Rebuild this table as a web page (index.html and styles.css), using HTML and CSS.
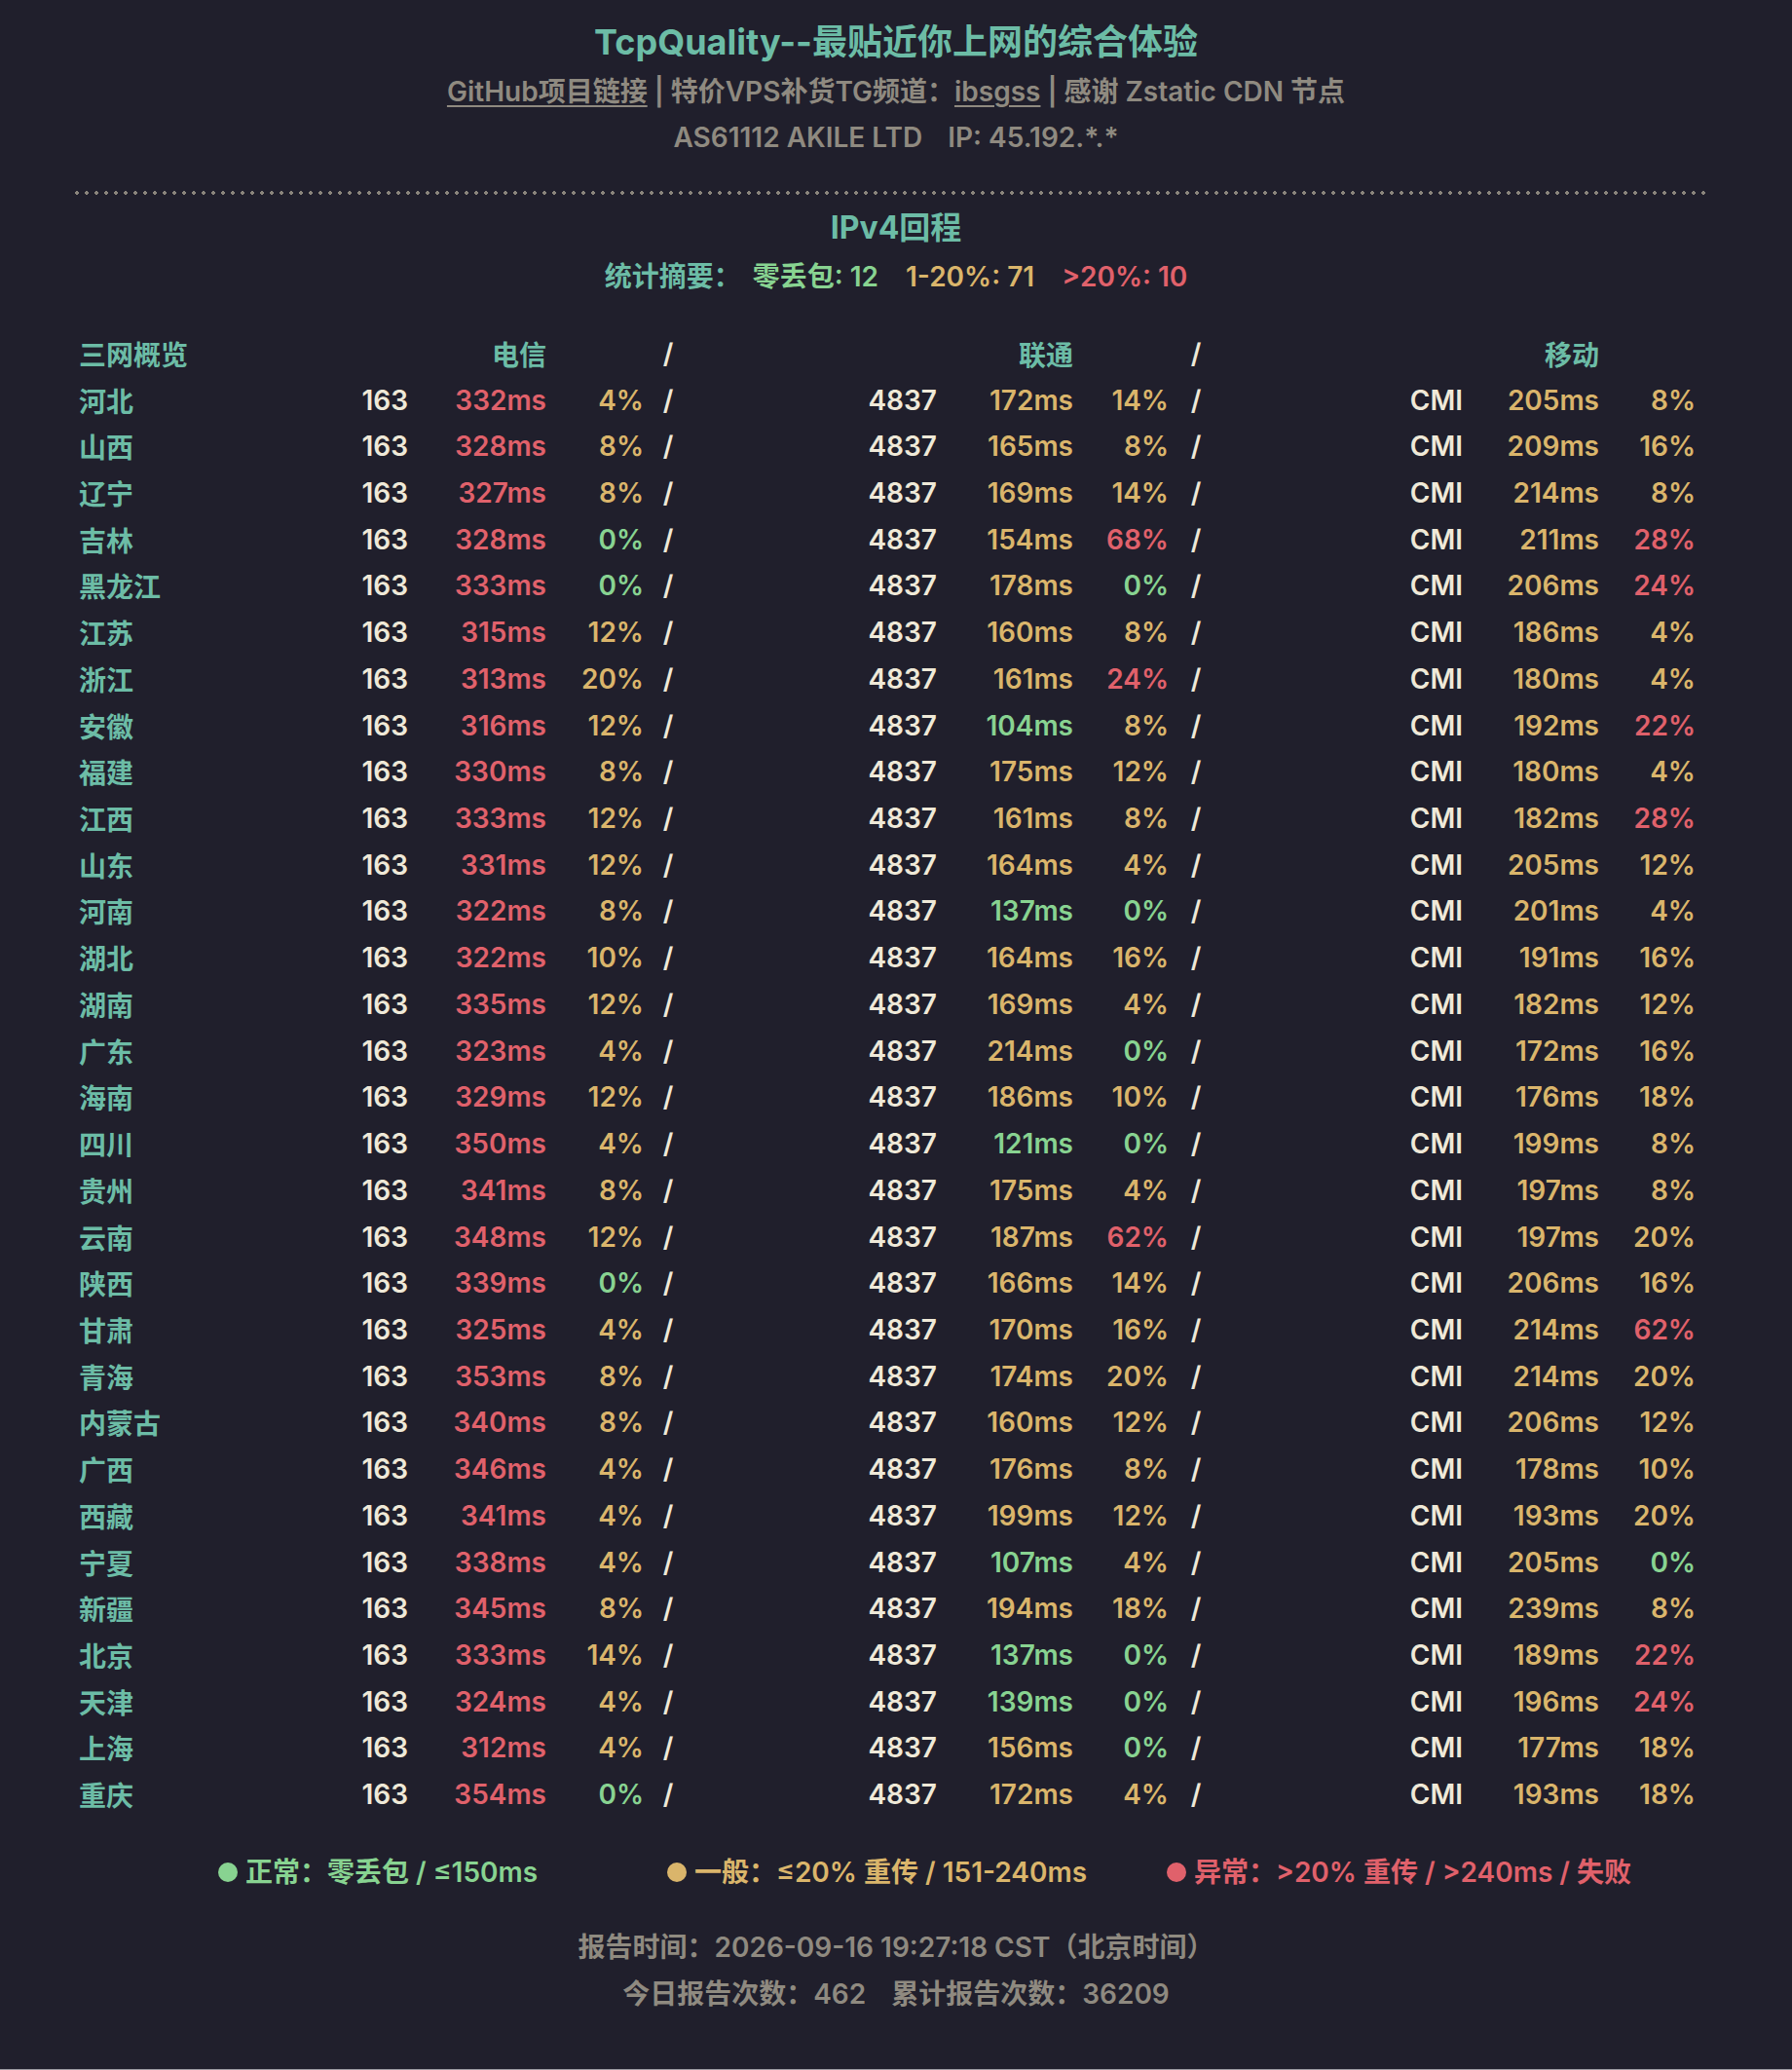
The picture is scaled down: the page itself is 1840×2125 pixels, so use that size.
FILE: index.html
```html
<!DOCTYPE html>
<html lang="zh-CN">
<head>
<meta charset="utf-8">
<title>TcpQuality</title>
<link rel="stylesheet" href="styles.css">
</head>
<body>
<div class="page">
  <div class="wrap">
    <h1 class="title">TcpQuality--最贴近你上网的综合体验</h1>
    <div class="sub"><a class="lnk">GitHub项目链接</a><span class="bar">|</span>特价VPS补货TG频道：<a class="lnk">ibsgss</a><span class="bar">|</span>感谢 Zstatic CDN 节点</div>
    <div class="asline">AS61112 AKILE LTD<span class="gap"></span>IP: 45.192.*.*</div>
    <div class="dots"></div>
    <h2 class="section">IPv4回程</h2>
    <div class="stats"><span class="t">统计摘要：</span><span class="g">零丢包: 12</span><span class="y">1-20%: 71</span><span class="r">&gt;20%: 10</span></div>

    <div class="tbl">
      <div class="row head"><span class="prov">三网概览</span><span></span><span class="num t">电信</span><span></span><span class="sl">/</span><span></span><span class="num t">联通</span><span></span><span class="sl">/</span><span></span><span class="num t">移动</span><span></span></div>
      <div class="row"><span class="prov">河北</span><span class="asn">163</span><span class="num r">332ms</span><span class="num y">4%</span><span class="sl">/</span><span class="asn">4837</span><span class="num y">172ms</span><span class="num y">14%</span><span class="sl">/</span><span class="asn">CMI</span><span class="num y">205ms</span><span class="num y">8%</span></div>
      <div class="row"><span class="prov">山西</span><span class="asn">163</span><span class="num r">328ms</span><span class="num y">8%</span><span class="sl">/</span><span class="asn">4837</span><span class="num y">165ms</span><span class="num y">8%</span><span class="sl">/</span><span class="asn">CMI</span><span class="num y">209ms</span><span class="num y">16%</span></div>
      <div class="row"><span class="prov">辽宁</span><span class="asn">163</span><span class="num r">327ms</span><span class="num y">8%</span><span class="sl">/</span><span class="asn">4837</span><span class="num y">169ms</span><span class="num y">14%</span><span class="sl">/</span><span class="asn">CMI</span><span class="num y">214ms</span><span class="num y">8%</span></div>
      <div class="row"><span class="prov">吉林</span><span class="asn">163</span><span class="num r">328ms</span><span class="num g">0%</span><span class="sl">/</span><span class="asn">4837</span><span class="num y">154ms</span><span class="num r">68%</span><span class="sl">/</span><span class="asn">CMI</span><span class="num y">211ms</span><span class="num r">28%</span></div>
      <div class="row"><span class="prov">黑龙江</span><span class="asn">163</span><span class="num r">333ms</span><span class="num g">0%</span><span class="sl">/</span><span class="asn">4837</span><span class="num y">178ms</span><span class="num g">0%</span><span class="sl">/</span><span class="asn">CMI</span><span class="num y">206ms</span><span class="num r">24%</span></div>
      <div class="row"><span class="prov">江苏</span><span class="asn">163</span><span class="num r">315ms</span><span class="num y">12%</span><span class="sl">/</span><span class="asn">4837</span><span class="num y">160ms</span><span class="num y">8%</span><span class="sl">/</span><span class="asn">CMI</span><span class="num y">186ms</span><span class="num y">4%</span></div>
      <div class="row"><span class="prov">浙江</span><span class="asn">163</span><span class="num r">313ms</span><span class="num y">20%</span><span class="sl">/</span><span class="asn">4837</span><span class="num y">161ms</span><span class="num r">24%</span><span class="sl">/</span><span class="asn">CMI</span><span class="num y">180ms</span><span class="num y">4%</span></div>
      <div class="row"><span class="prov">安徽</span><span class="asn">163</span><span class="num r">316ms</span><span class="num y">12%</span><span class="sl">/</span><span class="asn">4837</span><span class="num g">104ms</span><span class="num y">8%</span><span class="sl">/</span><span class="asn">CMI</span><span class="num y">192ms</span><span class="num r">22%</span></div>
      <div class="row"><span class="prov">福建</span><span class="asn">163</span><span class="num r">330ms</span><span class="num y">8%</span><span class="sl">/</span><span class="asn">4837</span><span class="num y">175ms</span><span class="num y">12%</span><span class="sl">/</span><span class="asn">CMI</span><span class="num y">180ms</span><span class="num y">4%</span></div>
      <div class="row"><span class="prov">江西</span><span class="asn">163</span><span class="num r">333ms</span><span class="num y">12%</span><span class="sl">/</span><span class="asn">4837</span><span class="num y">161ms</span><span class="num y">8%</span><span class="sl">/</span><span class="asn">CMI</span><span class="num y">182ms</span><span class="num r">28%</span></div>
      <div class="row"><span class="prov">山东</span><span class="asn">163</span><span class="num r">331ms</span><span class="num y">12%</span><span class="sl">/</span><span class="asn">4837</span><span class="num y">164ms</span><span class="num y">4%</span><span class="sl">/</span><span class="asn">CMI</span><span class="num y">205ms</span><span class="num y">12%</span></div>
      <div class="row"><span class="prov">河南</span><span class="asn">163</span><span class="num r">322ms</span><span class="num y">8%</span><span class="sl">/</span><span class="asn">4837</span><span class="num g">137ms</span><span class="num g">0%</span><span class="sl">/</span><span class="asn">CMI</span><span class="num y">201ms</span><span class="num y">4%</span></div>
      <div class="row"><span class="prov">湖北</span><span class="asn">163</span><span class="num r">322ms</span><span class="num y">10%</span><span class="sl">/</span><span class="asn">4837</span><span class="num y">164ms</span><span class="num y">16%</span><span class="sl">/</span><span class="asn">CMI</span><span class="num y">191ms</span><span class="num y">16%</span></div>
      <div class="row"><span class="prov">湖南</span><span class="asn">163</span><span class="num r">335ms</span><span class="num y">12%</span><span class="sl">/</span><span class="asn">4837</span><span class="num y">169ms</span><span class="num y">4%</span><span class="sl">/</span><span class="asn">CMI</span><span class="num y">182ms</span><span class="num y">12%</span></div>
      <div class="row"><span class="prov">广东</span><span class="asn">163</span><span class="num r">323ms</span><span class="num y">4%</span><span class="sl">/</span><span class="asn">4837</span><span class="num y">214ms</span><span class="num g">0%</span><span class="sl">/</span><span class="asn">CMI</span><span class="num y">172ms</span><span class="num y">16%</span></div>
      <div class="row"><span class="prov">海南</span><span class="asn">163</span><span class="num r">329ms</span><span class="num y">12%</span><span class="sl">/</span><span class="asn">4837</span><span class="num y">186ms</span><span class="num y">10%</span><span class="sl">/</span><span class="asn">CMI</span><span class="num y">176ms</span><span class="num y">18%</span></div>
      <div class="row"><span class="prov">四川</span><span class="asn">163</span><span class="num r">350ms</span><span class="num y">4%</span><span class="sl">/</span><span class="asn">4837</span><span class="num g">121ms</span><span class="num g">0%</span><span class="sl">/</span><span class="asn">CMI</span><span class="num y">199ms</span><span class="num y">8%</span></div>
      <div class="row"><span class="prov">贵州</span><span class="asn">163</span><span class="num r">341ms</span><span class="num y">8%</span><span class="sl">/</span><span class="asn">4837</span><span class="num y">175ms</span><span class="num y">4%</span><span class="sl">/</span><span class="asn">CMI</span><span class="num y">197ms</span><span class="num y">8%</span></div>
      <div class="row"><span class="prov">云南</span><span class="asn">163</span><span class="num r">348ms</span><span class="num y">12%</span><span class="sl">/</span><span class="asn">4837</span><span class="num y">187ms</span><span class="num r">62%</span><span class="sl">/</span><span class="asn">CMI</span><span class="num y">197ms</span><span class="num y">20%</span></div>
      <div class="row"><span class="prov">陕西</span><span class="asn">163</span><span class="num r">339ms</span><span class="num g">0%</span><span class="sl">/</span><span class="asn">4837</span><span class="num y">166ms</span><span class="num y">14%</span><span class="sl">/</span><span class="asn">CMI</span><span class="num y">206ms</span><span class="num y">16%</span></div>
      <div class="row"><span class="prov">甘肃</span><span class="asn">163</span><span class="num r">325ms</span><span class="num y">4%</span><span class="sl">/</span><span class="asn">4837</span><span class="num y">170ms</span><span class="num y">16%</span><span class="sl">/</span><span class="asn">CMI</span><span class="num y">214ms</span><span class="num r">62%</span></div>
      <div class="row"><span class="prov">青海</span><span class="asn">163</span><span class="num r">353ms</span><span class="num y">8%</span><span class="sl">/</span><span class="asn">4837</span><span class="num y">174ms</span><span class="num y">20%</span><span class="sl">/</span><span class="asn">CMI</span><span class="num y">214ms</span><span class="num y">20%</span></div>
      <div class="row"><span class="prov">内蒙古</span><span class="asn">163</span><span class="num r">340ms</span><span class="num y">8%</span><span class="sl">/</span><span class="asn">4837</span><span class="num y">160ms</span><span class="num y">12%</span><span class="sl">/</span><span class="asn">CMI</span><span class="num y">206ms</span><span class="num y">12%</span></div>
      <div class="row"><span class="prov">广西</span><span class="asn">163</span><span class="num r">346ms</span><span class="num y">4%</span><span class="sl">/</span><span class="asn">4837</span><span class="num y">176ms</span><span class="num y">8%</span><span class="sl">/</span><span class="asn">CMI</span><span class="num y">178ms</span><span class="num y">10%</span></div>
      <div class="row"><span class="prov">西藏</span><span class="asn">163</span><span class="num r">341ms</span><span class="num y">4%</span><span class="sl">/</span><span class="asn">4837</span><span class="num y">199ms</span><span class="num y">12%</span><span class="sl">/</span><span class="asn">CMI</span><span class="num y">193ms</span><span class="num y">20%</span></div>
      <div class="row"><span class="prov">宁夏</span><span class="asn">163</span><span class="num r">338ms</span><span class="num y">4%</span><span class="sl">/</span><span class="asn">4837</span><span class="num g">107ms</span><span class="num y">4%</span><span class="sl">/</span><span class="asn">CMI</span><span class="num y">205ms</span><span class="num g">0%</span></div>
      <div class="row"><span class="prov">新疆</span><span class="asn">163</span><span class="num r">345ms</span><span class="num y">8%</span><span class="sl">/</span><span class="asn">4837</span><span class="num y">194ms</span><span class="num y">18%</span><span class="sl">/</span><span class="asn">CMI</span><span class="num y">239ms</span><span class="num y">8%</span></div>
      <div class="row"><span class="prov">北京</span><span class="asn">163</span><span class="num r">333ms</span><span class="num y">14%</span><span class="sl">/</span><span class="asn">4837</span><span class="num g">137ms</span><span class="num g">0%</span><span class="sl">/</span><span class="asn">CMI</span><span class="num y">189ms</span><span class="num r">22%</span></div>
      <div class="row"><span class="prov">天津</span><span class="asn">163</span><span class="num r">324ms</span><span class="num y">4%</span><span class="sl">/</span><span class="asn">4837</span><span class="num g">139ms</span><span class="num g">0%</span><span class="sl">/</span><span class="asn">CMI</span><span class="num y">196ms</span><span class="num r">24%</span></div>
      <div class="row"><span class="prov">上海</span><span class="asn">163</span><span class="num r">312ms</span><span class="num y">4%</span><span class="sl">/</span><span class="asn">4837</span><span class="num y">156ms</span><span class="num g">0%</span><span class="sl">/</span><span class="asn">CMI</span><span class="num y">177ms</span><span class="num y">18%</span></div>
      <div class="row"><span class="prov">重庆</span><span class="asn">163</span><span class="num r">354ms</span><span class="num g">0%</span><span class="sl">/</span><span class="asn">4837</span><span class="num y">172ms</span><span class="num y">4%</span><span class="sl">/</span><span class="asn">CMI</span><span class="num y">193ms</span><span class="num y">18%</span></div>
    </div>

    <div class="legend">
      <div class="item g"><span class="dot"></span>正常：零丢包 / ≤150ms</div>
      <div class="item y"><span class="dot"></span>一般：≤20% 重传 / 151-240ms</div>
      <div class="item r"><span class="dot"></span>异常：&gt;20% 重传 / &gt;240ms / 失败</div>
    </div>

    <div class="foot">报告时间：2026-09-16 19:27:18 CST（北京时间）</div>
    <div class="foot second">今日报告次数：462<span class="gap"></span>累计报告次数：36209</div>
  </div>
</div>
</body>
</html>
```

FILE: styles.css
```css
html, body {
  margin: 0;
  padding: 0;
}
body {
  background: #9c9ba3;
  font-family: Inter, "Noto Sans CJK SC", sans-serif;
  font-weight: 600;
  font-size: 28px;
}
.page {
  background: #201f2c;
  height: 2124px;
  box-sizing: border-box;
  padding-top: 20px;
  overflow: hidden;
}
.wrap {
  width: 1686px;
  margin: 0 auto;
  text-align: center;
}
.title {
  margin: 0;
  font-size: 36px;
  line-height: 46px;
  font-weight: 700;
  color: #6cbca6;
}
.sub {
  margin-top: 8px;
  line-height: 40px;
  color: #8f8a80;
}
.lnk {
  color: #8f8a80;
  text-decoration: underline;
  text-decoration-thickness: 2px;
  text-underline-offset: 4px;
}
.bar {
  margin: 0 7px;
  color: #8f8a80;
}
.asline {
  margin-top: 7px;
  line-height: 40px;
  color: #8f8a80;
}
.gap {
  display: inline-block;
  width: 26px;
}
.dots {
  margin: 35px 7px 0 -3px;
  height: 4px;
  background-image: radial-gradient(circle, #8a857c 1.6px, transparent 2.1px);
  background-size: 10px 4px;
  background-repeat: repeat-x;
}
.section {
  margin: 14px 0 0;
  font-size: 32px;
  line-height: 40px;
  font-weight: 700;
  color: #6cbca6;
}
.stats {
  margin-top: 10px;
  line-height: 40px;
  display: flex;
  justify-content: center;
  gap: 28px;
}
.stats .t { margin-right: -16px; }
.t { color: #6cbca6; }
.g { color: #88d391; }
.y { color: #dab56b; }
.r { color: #e0616b; }

.tbl {
  margin-top: 35px;
  padding-left: 4px;
  text-align: left;
}
.row {
  display: grid;
  grid-template-columns: 258px 80px 142px 100px 50px 251px 140px 98px 56px 246px 140px 99px;
  height: 47.73px;
  align-items: center;
}
.prov { color: #6cbca6; }
.asn { color: #efe9d8; text-align: right; }
.num { text-align: right; }
.sl { color: #efe9d8; text-align: center; }

.legend {
  margin-top: 36px;
  padding-left: 147px;
  line-height: 40px;
  display: flex;
  justify-content: flex-start;
}
.item {
  display: flex;
  align-items: center;
}
.item.y { margin-left: 133px; }
.item.r { margin-left: 82px; }
.dot {
  width: 20px;
  height: 20px;
  border-radius: 50%;
  background: currentColor;
  margin-right: 8px;
}
.foot {
  margin-top: 37px;
  line-height: 40px;
  color: #8f8a80;
}
.foot.second {
  margin-top: 8px;
}
```
